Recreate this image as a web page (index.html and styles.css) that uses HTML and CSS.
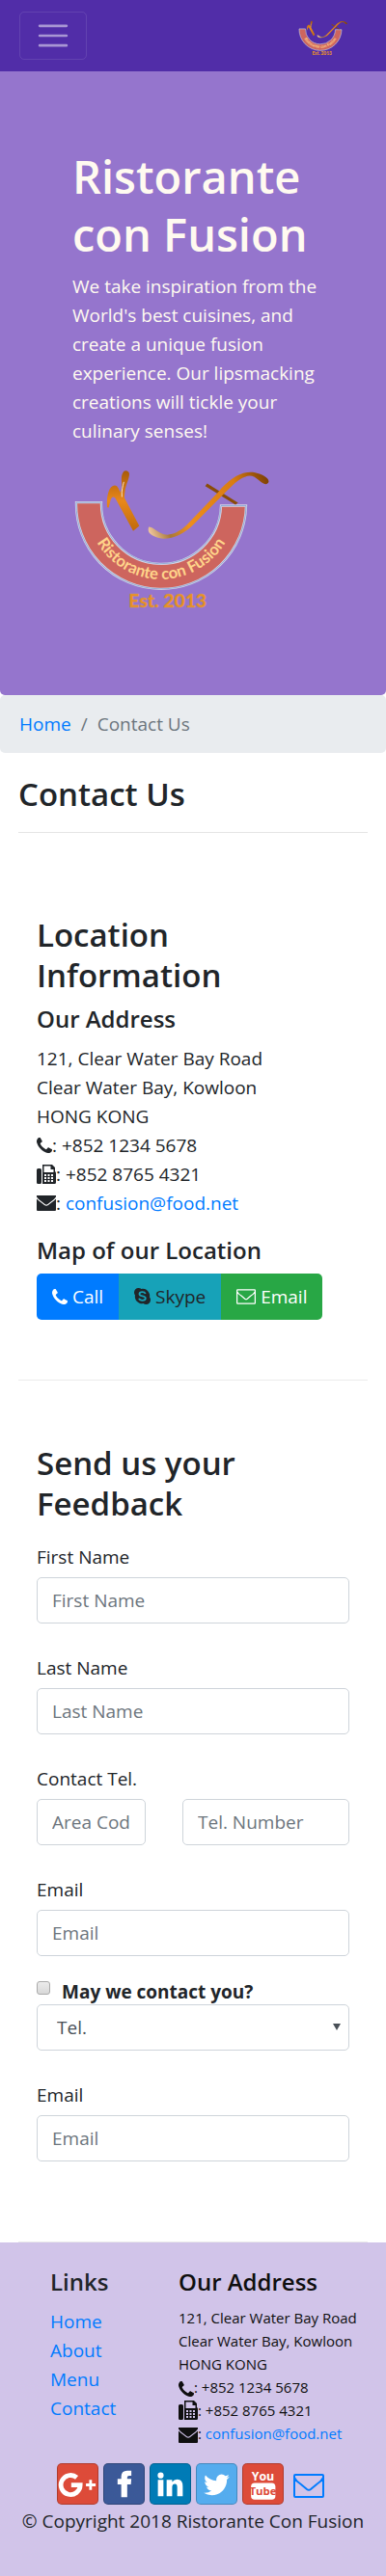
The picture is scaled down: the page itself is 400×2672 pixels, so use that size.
FILE: index.html
```html
<!DOCTYPE html>
<html lang="en">
<head>
<meta charset="utf-8">
<meta name="viewport" content="width=device-width, initial-scale=1">
<title>Ristorante Con Fusion: Contact Us</title>
<link rel="stylesheet" href="styles.css">
</head>
<body>
<svg class="defs" aria-hidden="true">
  <defs>
    <linearGradient id="brass" x1="0" y1="0" x2="0" y2="1">
      <stop offset="0" stop-color="#a85a08"/><stop offset=".5" stop-color="#e8881a"/><stop offset="1" stop-color="#c06a0c"/>
    </linearGradient>
    <linearGradient id="blade" gradientUnits="userSpaceOnUse" x1="280" y1="240" x2="655" y2="80">
      <stop offset="0" stop-color="#f0c8a0"/><stop offset=".14" stop-color="#a87838"/><stop offset=".3" stop-color="#ee8e1c"/><stop offset=".75" stop-color="#d87c12"/><stop offset="1" stop-color="#7c3f04"/>
    </linearGradient>
    <path id="bowl-arc" d="M90 160A231 231 0 0 0 552 160"/>
  </defs>
  <symbol id="logo" viewBox="45 50 612 434">
    <path d="M57 152H135A186 186 0 0 0 507 162H585A264 264 0 0 1 57 152Z" fill="#cd655e" stroke="#d5d3e6" stroke-width="7"/>
    <path d="M57 152H135A186 186 0 0 0 507 162H585A264 264 0 0 1 57 152Z" fill="none" stroke="#6f9bd0" stroke-width="2"/>
    <path d="M153 167C150 128 160 99 177 99C185 99 189 109 194 121C205 98 190 76 204 56C210 50 222 54 222 64C222 82 207 99 207 138L253 225L234 241L178 138C165 128 164 146 158 168Z" fill="url(#brass)"/>
    <path d="M199 135C197 115 202 101 205 88" fill="none" stroke="#f4dfc8" stroke-width="3"/>
    <path d="M464 93L560 153L552 159L458 101Z" fill="#8a4c08"/>
    <path d="M282 228C296 228 307 244 330 251C352 257 378 243 400 223L499 119C534 77 574 51 613 59C638 64 661 78 654 91C645 103 630 86 611 73C588 60 558 82 527 114L424 218C393 250 352 268 322 264C300 260 281 251 281 237Z" fill="url(#blade)"/>
    <text class="logo-ring" font-size="50"><textPath href="#bowl-arc" startOffset="50%" text-anchor="middle">Ristorante con Fusion</textPath></text>
    <text class="logo-year" x="341" y="477" font-size="58" text-anchor="middle">Est. 2013</text>
  </symbol>
  <symbol id="phone" viewBox="0 0 1408 1408"><path d="M1408 1112q0 27-10 70.5t-21 68.5q-21 50-122 106-94 51-186 51-27 0-53-3.5t-57.5-12.5-47-14.5-55.5-20.5-49-18q-98-35-175-83-127-79-264-216t-216-264q-48-77-83-175-3-9-18-49t-20.5-55.5-14.5-47-12.5-57.5-3.5-53q0-92 51-186 56-101 106-122 25-11 68.5-21t70.5-10q14 0 21 3 18 6 53 76 11 19 30 54t35 63.5 31 53.5q3 4 17.5 25t21.5 35.5 7 28.5q0 20-28.5 50t-62 55-62 53-28.5 46q0 9 5 22.5t8.5 20.5 14 24 11.5 19q76 137 174 235t235 174q2 1 19 11.5t24 14 20.5 8.5 22.5 5q18 0 46-28.5t53-62 55-62 50-28.5q14 0 28.5 7t35.5 21.5 25 17.5q25 15 53.5 31t63.5 35 54 30q70 35 76 53 3 7 3 21z"/></symbol>
  <symbol id="fax" viewBox="0 0 20 20"><path fill-rule="evenodd" d="M1.500 4H3.500Q5 4 5 5.500V18.500Q5 20 3.500 20H1.500Q0 20 0 18.500V5.500Q0 4 1.500 4ZM6 0H16L19 3V7Q20 7.500 20 9V18.500Q20 20 18.500 20H6ZM7.500 1.500V8H17.500V5H14.500V1.500ZM8 10V12H10V10ZM11.500 10V12H13.500V10ZM15 10V12H17V10ZM8 13V15H10V13ZM11.500 13V15H13.500V13ZM15 13V15H17V13ZM8 16V18H10V16ZM11.500 16V18H13.500V16ZM15 16V18H17V16Z"/></symbol>
  <symbol id="envelope" viewBox="0 0 20 16"><path d="M0 0H20V1.500Q18.500 4 15 6.300L11.500 9Q10 10.200 8.500 9L5 6.300Q1.500 4 0 1.500ZM0 3.500Q2 5.500 4.500 7.200L8 10Q10 11.500 12 10L15.500 7.200Q18 5.500 20 3.500V15Q20 16 19 16H1Q0 16 0 15Z"/></symbol>
  <symbol id="envelope-open" viewBox="0 0 32 25"><path d="M2 1H30Q31 1 31 2V23Q31 24 30 24H2Q1 24 1 23V2Q1 1 2 1ZM1 4Q3 8 8 11L14 16Q16 17.500 18 16L24 11Q29 8 31 4" fill="none" stroke="currentColor" stroke-width="2"/></symbol>
  <symbol id="skype" viewBox="0 0 17 17"><path d="M4.700 0Q6.200 0 7.500 .9A7.300 7.300 0 0 1 16 9.500Q17 10.800 17 12.300A4.600 4.600 0 0 1 12.300 17Q10.800 17 9.500 16.100A7.300 7.300 0 0 1 1 7.500Q0 6.200 0 4.700A4.600 4.600 0 0 1 4.700 0Z"/><path class="skype-s" d="M11.700 6Q11 4.200 8.500 4.200Q5.500 4.200 5.500 6.200Q5.500 7.800 8.500 8.400Q11.800 9 11.800 10.800Q11.800 12.800 8.600 12.800Q5.800 12.800 5.100 10.800" fill="none" stroke-width="1.800"/></symbol>
</svg>

<nav class="navbar">
  <button class="toggler" type="button" aria-label="Toggle navigation">
    <svg width="38" height="38" viewBox="0 0 30 30" aria-hidden="true"><path d="M4 7h22M4 15h22M4 23h22" stroke="currentColor" stroke-width="2" stroke-linecap="round" stroke-miterlimit="10"/></svg>
  </button>
  <a class="brand" href="#" aria-label="Ristorante con Fusion"><svg class="brand-logo"><use href="#logo"/></svg></a>
</nav>

<header class="jumbotron">
  <h1>Ristorante con Fusion</h1>
  <p>We take inspiration from the World's best cuisines, and create a unique fusion experience. Our lipsmacking creations will tickle your culinary senses!</p>
  <svg class="hero-logo" role="img" aria-label="Ristorante con Fusion, Est. 2013"><use href="#logo"/></svg>
</header>

<nav aria-label="Breadcrumb">
  <ol class="breadcrumb">
    <li><a href="#">Home</a></li>
    <li class="active">Contact Us</li>
  </ol>
</nav>

<main class="container">
  <h2 class="page-title">Contact Us</h2>

  <section class="location">
    <h2>Location Information</h2>
    <h3>Our Address</h3>
    <address>
      121, Clear Water Bay Road<br>
      Clear Water Bay, Kowloon<br>
      HONG KONG<br>
      <svg class="icon phone"><use href="#phone"/></svg>: +852 1234 5678<br>
      <svg class="icon fax"><use href="#fax"/></svg>: +852 8765 4321<br>
      <svg class="icon mail"><use href="#envelope"/></svg>: <a href="mailto:confusion@food.net">confusion@food.net</a>
    </address>
    <h3>Map of our Location</h3>
    <div class="btn-group">
      <a class="btn call" href="tel:+85212345678"><svg class="icon phone"><use href="#phone"/></svg> Call</a>
      <a class="btn skype" href="#"><svg class="icon skype-icon"><use href="#skype"/></svg> Skype</a>
      <a class="btn email" href="mailto:confusion@food.net"><svg class="icon mail"><use href="#envelope-open"/></svg> Email</a>
    </div>
  </section>

  <section class="feedback">
    <h2>Send us your Feedback</h2>
    <form>
      <div class="group">
        <label for="firstname">First Name</label>
        <input class="control" type="text" id="firstname" placeholder="First Name">
      </div>
      <div class="group">
        <label for="lastname">Last Name</label>
        <input class="control" type="text" id="lastname" placeholder="Last Name">
      </div>
      <div class="group">
        <label for="areacode">Contact Tel.</label>
        <div class="tel">
          <input class="control" type="tel" id="areacode" placeholder="Area Code">
          <input class="control" type="tel" id="telnum" placeholder="Tel. Number" aria-label="Tel. Number">
        </div>
      </div>
      <div class="group">
        <label for="email">Email</label>
        <input class="control" type="email" id="email" placeholder="Email">
      </div>
      <div class="group">
        <div class="check">
          <input type="checkbox" id="approve">
          <label for="approve">May we contact you?</label>
        </div>
        <div class="select">
          <select class="control" aria-label="Contact method"><option>Tel.</option><option>Email</option></select>
        </div>
      </div>
      <div class="group">
        <label for="email2">Email</label>
        <input class="control" type="email" id="email2" placeholder="Email">
      </div>
    </form>
  </section>
</main>

<footer class="footer">
  <div class="footer-cols">
    <div>
      <h3>Links</h3>
      <ul>
        <li><a href="#">Home</a></li>
        <li><a href="#">About</a></li>
        <li><a href="#">Menu</a></li>
        <li><a href="#">Contact</a></li>
      </ul>
    </div>
    <div class="footer-address">
      <h3>Our Address</h3>
      <address>
        121, Clear Water Bay Road<br>
        Clear Water Bay, Kowloon<br>
        HONG KONG<br>
        <svg class="icon phone"><use href="#phone"/></svg>: +852 1234 5678<br>
        <svg class="icon fax"><use href="#fax"/></svg>: +852 8765 4321<br>
        <svg class="icon mail"><use href="#envelope"/></svg>: <a href="mailto:confusion@food.net">confusion@food.net</a>
      </address>
    </div>
  </div>
  <div class="social">
    <a class="google" href="#" aria-label="Google+"><svg viewBox="0 0 43 43"><path d="M20.500 14.500A10.500 10.500 0 1 0 24.300 22.800H14.500" fill="none" stroke="#fff" stroke-width="5"/><path d="M30.500 21H34V17H37V21H41V24H37V28H34V24H30.500Z" fill="#fff"/></svg></a>
    <a class="facebook" href="#" aria-label="Facebook"><svg viewBox="0 0 42 43"><path d="M18 36V22H14V16H18V13.500Q18 7 24.500 7H29V12.500H26.500Q24.500 12.500 24.500 14.500V16H29L28.500 22H24.500V36Z" fill="#fff"/></svg></a>
    <a class="linkedin" href="#" aria-label="LinkedIn"><svg viewBox="0 0 43 43"><path d="M8 17H14V35H8ZM17.500 17H23.500V19.500Q25.500 16.500 29 16.500Q35 16.500 35 24V35H29V25Q29 21.500 26.500 21.500Q23.500 21.500 23.500 25V35H17.500ZM11 9A3 3 0 1 1 11 15.500A3.200 3.200 0 1 1 11 9Z" fill="#fff"/></svg></a>
    <a class="twitter" href="#" aria-label="Twitter"><svg viewBox="0 0 42 43"><path transform="translate(5 6.500) scale(.0178)" d="M1684 408q-67 98-162 167 1 14 1 42 0 130-38 259.500t-115.500 248.500-184.500 210.500-258 146-323 54.500q-271 0-496-145 35 4 78 4 225 0 401-138-105-2-188-64.500t-114-159.500q33 5 61 5 43 0 85-11-112-23-185.500-111.500t-73.500-205.500v-4q68 38 146 41-66-44-105-115t-39-154q0-88 44-163 121 149 294.500 238.500t371.500 99.500q-8-38-8-74 0-134 94.500-228.500t228.500-94.500q140 0 236 102 109-21 205-78-37 115-142 178 93-10 186-50z" fill="#fff"/></svg></a>
    <a class="youtube" href="#" aria-label="YouTube"><svg viewBox="0 0 43 43"><rect x="8.500" y="20.500" width="26.500" height="18" rx="4" fill="#fff"/><text class="tube-word" x="21.500" y="18" font-size="13" text-anchor="middle" fill="#fff">You</text><text class="tube-word" x="21.500" y="34" font-size="12" text-anchor="middle" fill="#dd4b39">Tube</text></svg></a>
    <a class="mail-link" href="mailto:confusion@food.net" aria-label="Email"><svg viewBox="0 0 32 25"><use href="#envelope-open"/></svg></a>
  </div>
  <p class="copyright">© Copyright 2018 Ristorante Con Fusion</p>
</footer>
</body>
</html>
```
FILE: styles.css
```css
*, *::before, *::after { box-sizing: border-box; }
body {
  margin: 0;
  background: #fff;
  color: #212529;
  font-family: "Open Sans", "Noto Sans", sans-serif;
  font-size: 19px;
  line-height: 30px;
}
a { color: #007bff; text-decoration: none; }
h1, h2, h3, p { margin: 0; }
h1 { font-size: 47px; line-height: 60px; font-weight: 600; }
h2 { font-size: 33px; line-height: 42px; font-weight: 600; }
h3 { font-size: 24px; line-height: 30px; font-weight: 600; }
address { font-style: normal; }
.defs { position: absolute; width: 0; height: 0; }
.icon { fill: currentColor; vertical-align: -1px; width: 20px; height: 16px; }
.icon.phone { width: 16px; height: 16px; }
.icon.fax { height: 20px; vertical-align: -3px; }

.navbar { display: flex; justify-content: space-between; align-items: center; padding: 12px 40px 12px 20px; background: #512da8; }
.toggler { display: flex; align-items: center; justify-content: center; width: 70px; height: 50px; padding: 0; background: none; border: 1px solid rgba(255,255,255,.1); border-radius: 5px; color: rgba(255,255,255,.5); }
.brand-logo { display: block; width: 51px; height: 37px; margin-top: 4px; }
.logo-ring { font-family: Lato, sans-serif; font-weight: 700; fill: #ffd48a; }
.logo-year { font-family: Lato, sans-serif; font-weight: 900; fill: #ea9022; stroke: #c9996a; stroke-width: 1px; }

.jumbotron { padding: 79px 60px 89px 75px; background: #9575cd; color: floralwhite; border-radius: 0 0 5px 5px; }
.jumbotron p { padding-top: 9px; }
.hero-logo { display: block; width: 100%; max-width: 204px; height: 145px; margin-top: 25px; }

.breadcrumb { display: flex; margin: 0; padding: 15px 20px; list-style: none; background: #e9ecef; border-radius: 5px; }
.breadcrumb .active { color: #6c757d; }
.breadcrumb .active::before { content: "/"; padding: 0 10px; }

.container { padding: 0 19px; }
.page-title { padding: 22px 0 18px; border-bottom: 1px solid #e5e5e5; }
.location, .feedback { padding: 85px 19px 62px; border-bottom: 1px solid #ebebeb; }
.feedback { padding-top: 65px; padding-bottom: 59px; }
.location h2, .feedback h2 { max-width: 260px; margin-bottom: 9px; }
.feedback h2 { margin-bottom: 12px; }
.location address { margin: 11px 0 19px; }

.btn-group { display: flex; width: max-content; margin-top: 9px; border-radius: 5px; overflow: hidden; }
.btn { padding: 9px 16px; color: #fff; white-space: nowrap; }
.call { background: #007bff; }
.skype { background: #17a2b8; color: #212529; }
.skype-icon { width: 17px; height: 17px; }
.skype-s { stroke: #17a2b8; }
.email { background: #28a745; }

.group { margin-bottom: 24px; }
.group > label { display: block; padding: 7px 0 6px; }
.control { display: block; width: 100%; height: 48px; padding: 0 15px; border: 1px solid #ced4da; border-radius: 5px; background: #fff; color: #495057; font: inherit; }
.control::placeholder { color: #6c757d; opacity: 1; }
.tel { display: grid; grid-template-columns: 113fr 173fr; gap: 38px; }
.check { display: flex; align-items: flex-start; gap: 12px; font-weight: 700; }
.check label { line-height: 26px; }
.check input { appearance: none; width: 14px; height: 14px; margin: 2px 0; border: 1px solid #aaa; border-radius: 3px; background: linear-gradient(#ececec, #d8d8d8); }
.select { position: relative; }
.select select { appearance: none; padding: 0 20px; }
.select::after { content: ""; position: absolute; top: 20px; right: 9px; border: solid transparent; border-width: 7px 4px 0; border-top-color: #495057; pointer-events: none; }

.footer { padding: 26px 22px 42px; background: #d1c4e9; }
.footer-cols { display: flex; padding-left: 30px; }
.footer-cols > div:first-child { width: 133px; }
.footer ul { margin: 11px 0 0; padding: 0; list-style: none; }
.footer-address { flex: 1; color: #0f0f0f; }
.footer-address address { margin-top: 10px; font-size: 15px; line-height: 24px; white-space: nowrap; }
.footer-address .icon { vertical-align: -4px; }
.social { display: flex; justify-content: center; align-items: center; gap: 5px; margin: 19px 0 2px; }
.social a { display: block; width: 43px; height: 43px; border: 1px solid rgba(0,0,0,.2); border-radius: 5px; }
.social svg { display: block; width: 100%; height: 100%; }
.google, .youtube { background: #dd4b39; }
.facebook { background: #3b5998; }
.linkedin { background: #007bb6; }
.twitter { background: #55acee; }
.social .mail-link { width: 42px; height: 43px; padding: 11px 5px 7px; border: 0; }
.tube-word { font-family: "Liberation Sans Narrow", "Open Sans", sans-serif; font-weight: 700; }
.copyright { text-align: center; }
```
